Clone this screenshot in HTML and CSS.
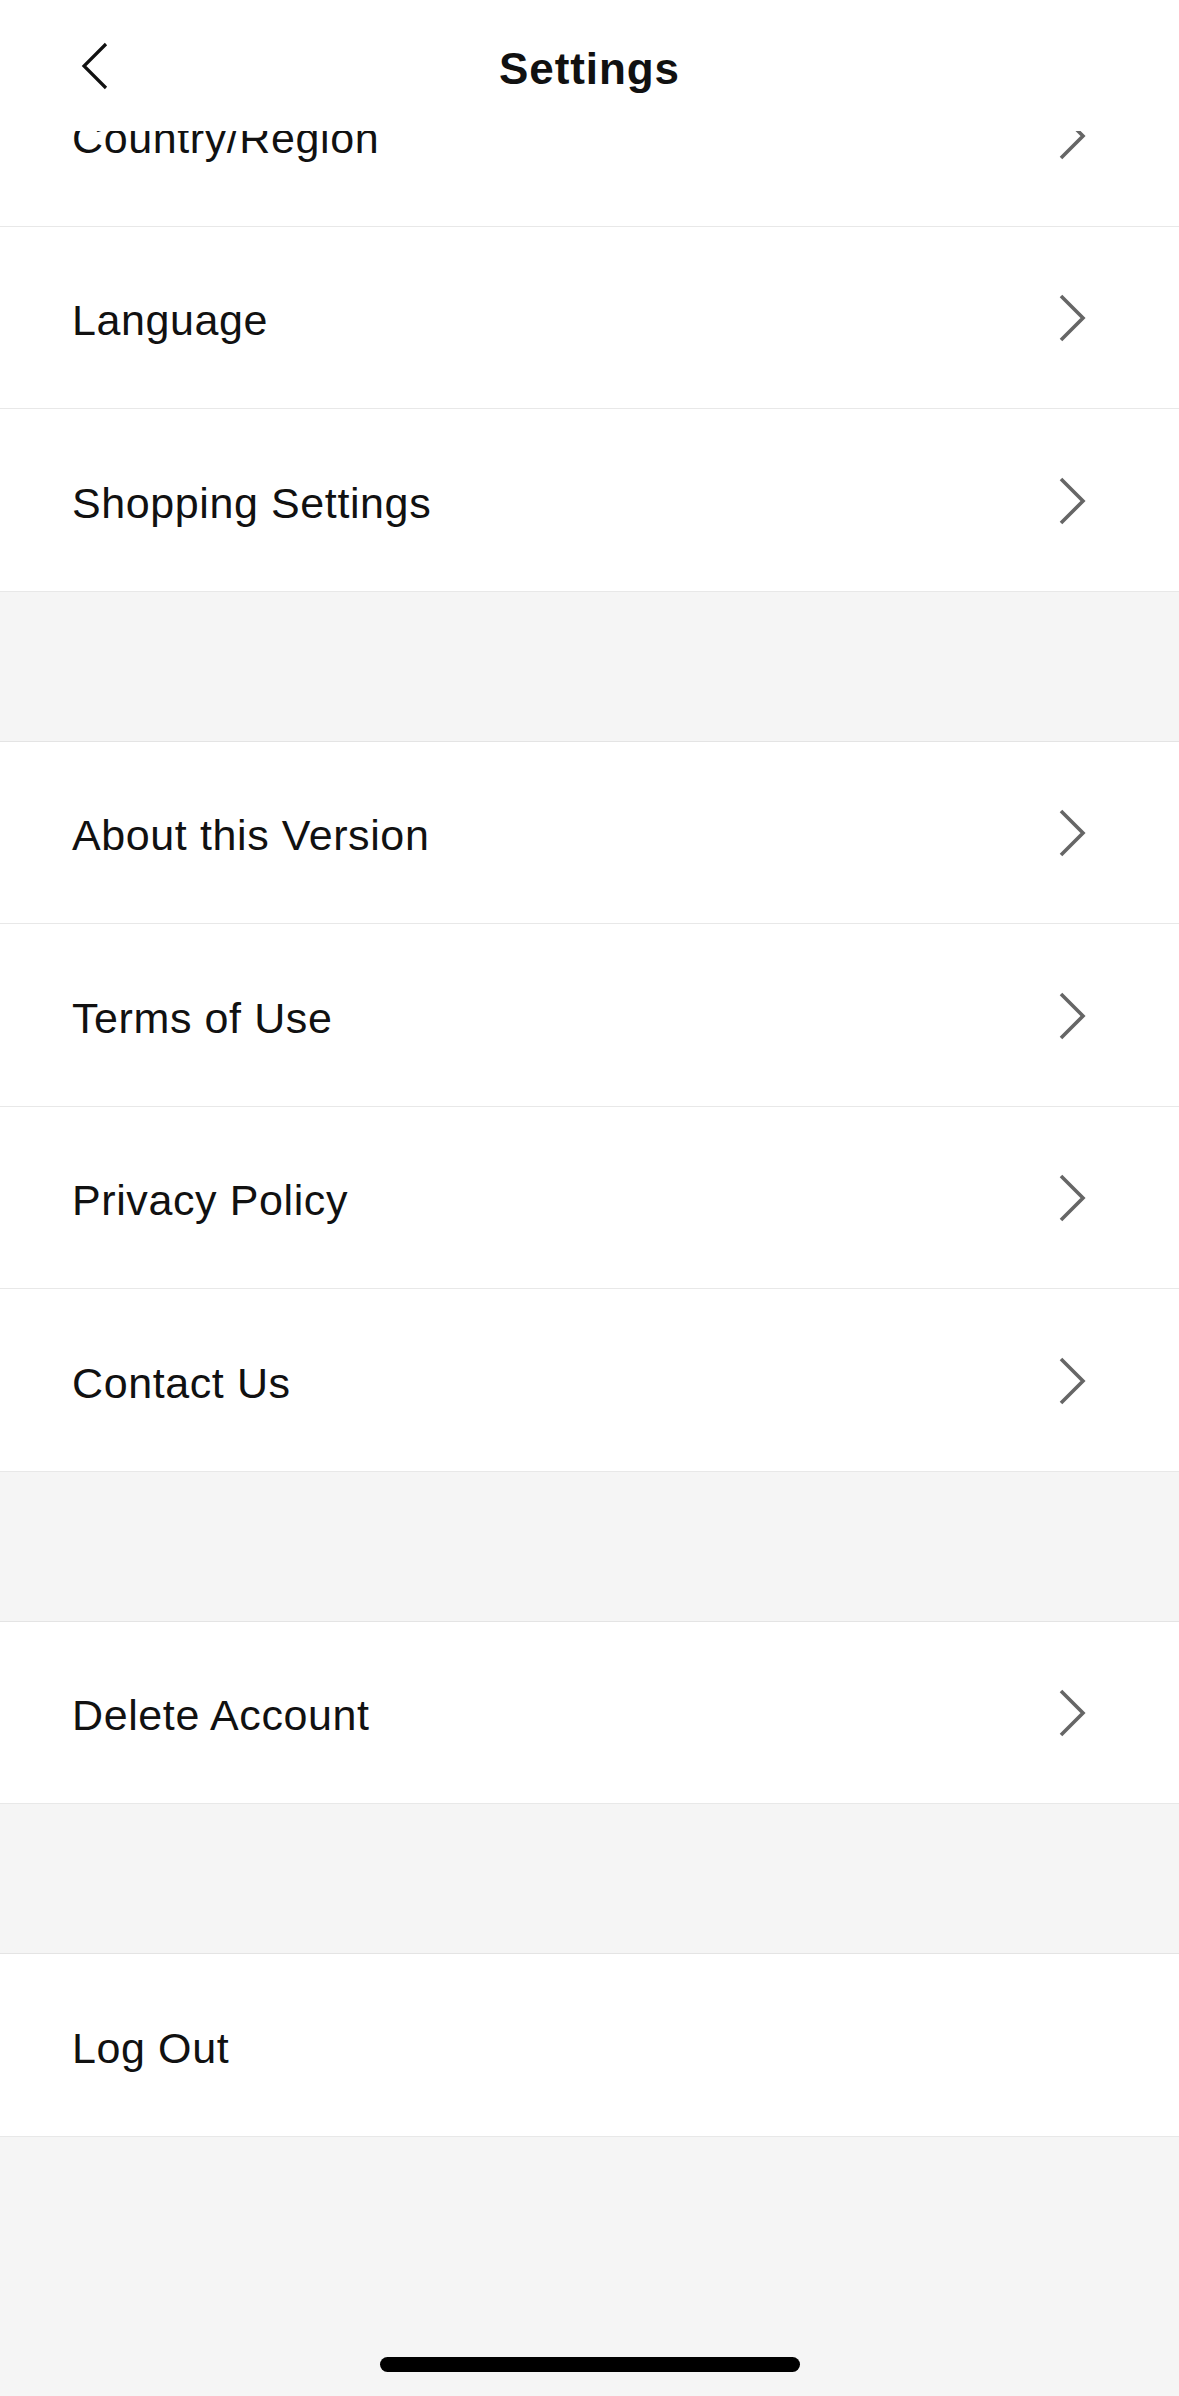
FILE: index.html
```html
<!DOCTYPE html>
<html lang="en">
<head>
<meta charset="utf-8">
<title>Settings</title>
<link rel="stylesheet" href="styles.css">
</head>
<body>
<div class="screen">
  <header class="header">
    <button class="back" aria-label="Back">
      <svg width="30" height="50" viewBox="0 0 30 50"><polyline points="26,3 4,25 26,47" fill="none" stroke="#111" stroke-width="3.2" stroke-linejoin="miter"/></svg>
    </button>
    <h1 class="title">Settings</h1>
    <span class="spacer"></span>
  </header>

  <main class="list">
    <section class="group first">
      <div class="row"><span class="label">Country/Region</span><svg class="chev" width="30" height="50" viewBox="0 0 30 50"><polyline points="4,3 26,25 4,47" fill="none" stroke="#666" stroke-width="3.6"/></svg></div>
      <div class="row"><span class="label">Language</span><svg class="chev" width="30" height="50" viewBox="0 0 30 50"><polyline points="4,3 26,25 4,47" fill="none" stroke="#666" stroke-width="3.6"/></svg></div>
      <div class="row"><span class="label">Shopping Settings</span><svg class="chev" width="30" height="50" viewBox="0 0 30 50"><polyline points="4,3 26,25 4,47" fill="none" stroke="#666" stroke-width="3.6"/></svg></div>
    </section>
    <div class="gap"></div>
    <section class="group">
      <div class="row"><span class="label">About this Version</span><svg class="chev" width="30" height="50" viewBox="0 0 30 50"><polyline points="4,3 26,25 4,47" fill="none" stroke="#666" stroke-width="3.6"/></svg></div>
      <div class="row"><span class="label">Terms of Use</span><svg class="chev" width="30" height="50" viewBox="0 0 30 50"><polyline points="4,3 26,25 4,47" fill="none" stroke="#666" stroke-width="3.6"/></svg></div>
      <div class="row"><span class="label">Privacy Policy</span><svg class="chev" width="30" height="50" viewBox="0 0 30 50"><polyline points="4,3 26,25 4,47" fill="none" stroke="#666" stroke-width="3.6"/></svg></div>
      <div class="row"><span class="label">Contact Us</span><svg class="chev" width="30" height="50" viewBox="0 0 30 50"><polyline points="4,3 26,25 4,47" fill="none" stroke="#666" stroke-width="3.6"/></svg></div>
    </section>
    <div class="gap"></div>
    <section class="group">
      <div class="row"><span class="label">Delete Account</span><svg class="chev" width="30" height="50" viewBox="0 0 30 50"><polyline points="4,3 26,25 4,47" fill="none" stroke="#666" stroke-width="3.6"/></svg></div>
    </section>
    <div class="gap"></div>
    <section class="group">
      <div class="row"><span class="label">Log Out</span></div>
    </section>
  </main>

  <div class="home-bar"><span class="home-indicator"></span></div>
</div>
</body>
</html>
```

FILE: styles.css
```css
html, body {
  margin: 0;
  padding: 0;
}
body {
  background: #f5f5f5;
  font-family: "Liberation Sans", Arial, sans-serif;
  color: #111;
}
.screen {
  position: relative;
  width: 1179px;
  height: 2396px;
  overflow: hidden;
  display: flex;
  flex-direction: column;
}
.header {
  position: absolute;
  top: 0;
  left: 0;
  right: 0;
  height: 131px;
  background: #fff;
  z-index: 2;
  display: grid;
  grid-template-columns: 200px 1fr 200px;
  align-items: center;
}
.back {
  border: 0;
  background: none;
  padding: 0 0 0 80px;
  margin: 0;
  display: flex;
  align-items: center;
  height: 50px;
  cursor: pointer;
}
.back svg { display: block; }
.title {
  margin: 0;
  padding-top: 6px;
  text-align: center;
  font-size: 44px;
  font-weight: 700;
  letter-spacing: 0.9px;
  color: #111;
}
.list {
  padding-top: 44px;
  display: flex;
  flex-direction: column;
}
.group {
  background: #fff;
  border-top: 1px solid #e4e4e4;
}
.group.first {
  border-top: 0;
}
.row {
  height: 181.5px;
  border-bottom: 1px solid #e8e8e8;
  display: flex;
  align-items: center;
  justify-content: space-between;
  padding: 0 92px 0 72px;
}
.label {
  font-size: 43px;
  letter-spacing: 0.6px;
  padding-top: 7px;
  color: #111;
}
.chev {
  display: block;
  margin-top: 2px;
}
.gap {
  height: 149px;
  background: #f5f5f5;
}
.home-bar {
  margin-top: auto;
  height: 39px;
  display: flex;
  justify-content: center;
  align-items: flex-start;
}
.home-indicator {
  width: 420px;
  height: 15px;
  border-radius: 8px;
  background: #000;
}
```
